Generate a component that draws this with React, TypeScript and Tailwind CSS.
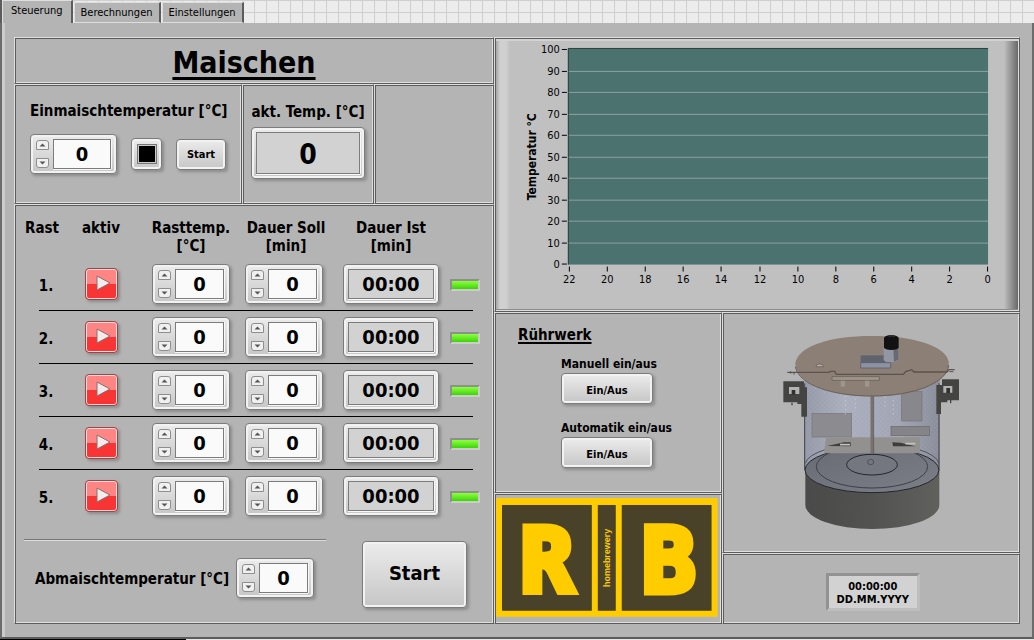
import { useState } from 'react';
import type { ReactNode } from 'react';

const tabs = ['Steuerung', 'Berechnungen', 'Einstellungen'];
const rests = [1, 2, 3, 4, 5];
const yTicks = [100, 90, 80, 70, 60, 50, 40, 30, 20, 10, 0];
const xTicks = [22, 20, 18, 16, 14, 12, 10, 8, 6, 4, 2, 0];

// Shared look of the raised silver controls and the sunken fields in them
const raised =
  'border border-[#7c7c7c] rounded-sm bg-linear-to-b from-[#ececec] to-[#c6c6c6] shadow-[inset_0_0_0_2px_#f2f2f2,2px_2px_3px_#8c8c8c]';
const sunken = 'border border-[#7c7c7c] shadow-[0_1px_0_#f8f8f8,1px_0_0_#f8f8f8]';

type PanelProps = {
  className?: string;
  children?: ReactNode;
};

const Panel = ({ className = '', children }: PanelProps) => (
  <section
    className={`border border-t-[#dedede] border-l-[#dedede] border-r-[#5c5c5c] border-b-[#5c5c5c] shadow-[inset_1px_1px_0_#5c5c5c,inset_-1px_-1px_0_#dedede] ${className}`}
  >
    {children}
  </section>
);

type SpinBoxProps = {
  id: string;
  label?: string;
  wide?: boolean;
};

const SpinBox = ({ id, label, wide = false }: SpinBoxProps) => {
  const [value, setValue] = useState(0);

  return (
    <div className={`inline-flex h-10 items-center gap-1 px-[5px] align-middle ${raised} ${wide ? 'w-[87px]' : 'w-[78px]'}`}>
      <div className="flex h-7 shrink-0 flex-col justify-between">
        <button
          type="button"
          aria-label="Wert erhöhen"
          onClick={() => setValue(value + 1)}
          className="flex h-[10px] w-[13px] items-center justify-center rounded-t-[3px] border border-[#8e8e8e] bg-[#f0f0f0]"
        >
          <svg width="7" height="4" viewBox="0 0 7 4">
            <path d="M0.5 3.5L3.5 0.5L6.5 3.5Z" fill="#555" />
          </svg>
        </button>
        <button
          type="button"
          aria-label="Wert verringern"
          onClick={() => setValue(value - 1)}
          className="flex h-[10px] w-[13px] items-center justify-center rounded-b-[3px] border border-[#8e8e8e] bg-[#f0f0f0]"
        >
          <svg width="7" height="4" viewBox="0 0 7 4">
            <path d="M0.5 0.5L3.5 3.5L6.5 0.5Z" fill="#555" />
          </svg>
        </button>
      </div>
      <input
        id={id}
        aria-label={label}
        inputMode="numeric"
        value={value}
        onChange={(e) => setValue(Number(e.target.value) || 0)}
        className={`h-[30px] min-w-0 flex-1 bg-[#fafafa] text-center text-xl font-bold leading-6 outline-none ${sunken}`}
      />
    </div>
  );
};

const TemperatureChart = () => (
  <svg viewBox="0 0 523 272" className="block w-full text-[11px]" role="img" aria-label="Temperaturverlauf">
    <rect x="72" y="9" width="421" height="217" fill="#4c726f" />
    <path d="M72.5 226V9.5H493" stroke="#2b4341" fill="none" />
    {yTicks.map((tick, i) => {
      const y = Math.round(10 + i * 21.5) + 0.5;
      return (
        <g key={tick}>
          {i > 0 && i < 10 && <path d={`M73 ${y}H493`} stroke="#8aa3a1" />}
          <path d={`M66 ${y}H71`} stroke="#000" />
          <text x="64" y={y + 4} textAnchor="end">
            {tick}
          </text>
        </g>
      );
    })}
    {xTicks.map((tick, i) => {
      const x = Math.round(73 + i * 38.1) + 0.5;
      return (
        <g key={tick}>
          <path d={`M${x} 228V233`} stroke="#000" />
          <text x={x} y="244" textAnchor="middle">
            {tick}
          </text>
        </g>
      );
    })}
    <text transform="translate(40 118) rotate(-90)" textAnchor="middle" className="text-xs font-bold">
      Temperatur °C
    </text>
  </svg>
);

const Logo = () => (
  <svg viewBox="0 0 222 119" className="block w-full" role="img" aria-label="RB homebrewery">
    <rect width="222" height="119" fill="#ffcc00" />
    <g fill="#494229">
      <rect x="6" y="7" width="90" height="106" />
      <rect x="102" y="7" width="18" height="106" />
      <rect x="126" y="7" width="90" height="106" />
    </g>
    <g
      fill="#ffcc00"
      stroke="#ffcc00"
      strokeWidth="7"
      className="font-['DejaVu_Sans_Mono',monospace] text-[89px] font-bold"
    >
      <text x="51" y="94" textAnchor="middle">
        R
      </text>
      <text x="173" y="94" textAnchor="middle">
        B
      </text>
    </g>
    <text
      transform="translate(114 60) rotate(-90)"
      textAnchor="middle"
      fill="#ffcc00"
      className="font-['Liberation_Sans',sans-serif] text-[9px] font-bold"
    >
      homebrewery
    </text>
  </svg>
);

const BrewKettle = () => (
  <svg viewBox="0 0 600 660" className="block w-[200px]" role="img" aria-label="Braukessel mit Rührwerk">
    <defs>
      <linearGradient id="glass" x1="0" x2="1" y1="0" y2="0">
        <stop offset="0" stopColor="#9599a8" />
        <stop offset="0.3" stopColor="#acb0bf" />
        <stop offset="0.7" stopColor="#a2a6b4" />
        <stop offset="1" stopColor="#8b8e9a" />
      </linearGradient>
      <linearGradient id="base" x1="0" x2="1" y1="0" y2="0">
        <stop offset="0" stopColor="#4a4a4a" />
        <stop offset="0.5" stopColor="#525250" />
        <stop offset="1" stopColor="#60605d" />
      </linearGradient>
      <linearGradient id="floor" x1="0" x2="1" y1="0" y2="1">
        <stop offset="0" stopColor="#686b73" />
        <stop offset="1" stopColor="#7c7f88" />
      </linearGradient>
      <pattern id="speckle" width="14" height="14" patternUnits="userSpaceOnUse">
        <path d="M2 3h3M9 10h3" stroke="#c7cad6" strokeWidth="2" />
        <path d="M9 3h3M2 10h3" stroke="#858999" strokeWidth="2" />
      </pattern>
    </defs>
    {/* vessel */}
    <path d="M106 180H508V555A201 72 0 0 1 106 555Z" fill="url(#base)" />
    <path d="M104 180H507V450H104Z" fill="url(#glass)" />
    <path d="M104 180H507V400H104Z" fill="url(#speckle)" opacity="0.35" />
    <ellipse cx="306" cy="450" rx="201" ry="68" fill="url(#floor)" stroke="#23262c" strokeWidth="3" />
    <path d="M106 430A201 64 0 0 1 507 430" fill="none" stroke="#50545d" strokeWidth="3" />
    <ellipse cx="306" cy="440" rx="167" ry="64" fill="none" stroke="#3c4048" strokeWidth="3" />
    <ellipse cx="306" cy="434" rx="76" ry="31" fill="#747780" stroke="#23262c" strokeWidth="3" />
    <ellipse cx="302" cy="426" rx="9" ry="8" fill="none" stroke="#3c4048" strokeWidth="2" />
    <path d="M104 190V450M507 190V450" stroke="#3d4046" strokeWidth="3" />
    {/* paddles */}
    <rect x="126" y="280" width="119" height="71" fill="#8c8b8f" stroke="#77777c" strokeWidth="2" />
    <rect x="395" y="215" width="61" height="88" fill="#88878b" stroke="#737378" strokeWidth="2" />
    <path d="M168 352H450V400H162Z" fill="#93918f" />
    <rect x="363" y="319" width="115" height="28" fill="#858488" stroke="#68686c" strokeWidth="2" />
    <path d="M172 378L222 367H242V379Z" fill="#3c3d3e" />
    <path d="M367 367L392 368L436 379H369Z" fill="#3c3d3e" />
    <path d="M210 374h30M406 371h30" stroke="#c2c1bd" strokeWidth="5" />
    <path d="M306 225V402" stroke="#77726f" strokeWidth="9" />
    <path d="M311 225V402" stroke="#55514f" strokeWidth="2" />
    <path d="M226 228V285M256 235V275M345 230V270M370 240V290" stroke="#d5d8e2" strokeWidth="2" strokeDasharray="4 9" />
    {/* handles */}
    <path
      d="M40 184H102V202H111V290H94V252H82V247H40ZM57 201V222H88V201Z"
      fill="#444543"
      fillRule="evenodd"
    />
    <path d="M65 210H76V224H65Z" fill="#303130" />
    <path
      d="M567 178H516V195H499V282H513V247H532V241H567ZM547 198V218H520V198Z"
      fill="#444543"
      fillRule="evenodd"
    />
    <path d="M529 204H540V219H529Z" fill="#303130" />
    <path d="M66 248v8M542 240v10" stroke="#444543" strokeWidth="4" />
    {/* lid */}
    <path d="M76 129C86 78 178 48 306 48C434 48 526 78 536 125C544 184 440 229 306 229C177 229 75 188 76 129Z" fill="#8b7f76" />
    <path d="M76 140C86 196 190 228 306 228C432 228 533 188 536 135" fill="none" stroke="#686059" strokeWidth="3" />
    <path
      d="M52 157H176L182 154H194L199 163H400L407 155L425 149L432 156H531L537 149H554"
      fill="none"
      stroke="#5b534e"
      strokeWidth="4"
    />
    <path d="M62 161V154M72 164V156M538 155H550" stroke="#5b534e" strokeWidth="3" />
    <path d="M186 170H328V181H186Z" fill="#a0958a" stroke="#635b55" strokeWidth="2" />
    <path d="M212 182H225V200H212ZM285 182H298V200H285Z" fill="#a0958a" />
    <path d="M138 140A11 8 0 0 1 160 140Z" fill="#b8b2ab" stroke="#5b534e" strokeWidth="2" />
    {/* motor */}
    <path d="M272 106H346V128H272Z" fill="#5f636e" />
    <path d="M272 128H362V144H272Z" fill="#8c92a3" stroke="#515560" strokeWidth="2" />
    <path d="M341 82H385V119A22 8 0 0 1 341 119Z" fill="#9396a3" />
    <path d="M370 84H385V119L372 125Z" fill="#686a73" />
    <path d="M342 54A22 9 0 0 1 386 54V82A22 8 0 0 1 342 82Z" fill="#111211" />
    <path d="M356 50A10 4 0 0 1 374 50" fill="none" stroke="#41423f" strokeWidth="3" />
  </svg>
);

const App = () => {
  const [activeTab, setActiveTab] = useState('Steuerung');

  return (
    <div className="flex min-h-screen flex-col bg-[#b4b4b4] font-['DejaVu_Sans_Condensed','DejaVu_Sans',sans-serif] text-black">
      <nav className="flex h-[23px] items-end gap-px border-l-2 border-[#5c5c5c] bg-[#ececec] bg-[linear-gradient(#cfcfcf_1px,transparent_1px),linear-gradient(90deg,#cfcfcf_1px,transparent_1px)] bg-size-[12px_12px] text-[11px] leading-4">
        {tabs.map((tab) => (
          <button
            key={tab}
            type="button"
            onClick={() => setActiveTab(tab)}
            className={`border-t border-l border-r-2 border-t-[#dedede] border-l-[#dedede] border-r-[#5c5c5c] bg-[#b4b4b4] ${
              tab === activeTab ? 'h-full px-2 pb-0.5' : 'h-[21px] border-b border-b-[#dedede] px-[6px]'
            }`}
          >
            {tab}
          </button>
        ))}
      </nav>

      <main className="flex flex-1 border-l-2 border-r-2 border-b-2 border-l-[#6c6c6c] border-r-[#6c6c6c] border-b-[#5c5c5c] bg-[#b4b4b4] px-3 pt-[14px] pb-[13px] shadow-[inset_3px_0_0_#cccccc]">
        <div className="flex shrink grow-[480] basis-0 flex-col">
          <Panel className="flex h-[47px] items-center justify-center">
            <h1 className="pt-1 pr-5 text-3xl font-bold underline decoration-3 underline-offset-4">Maischen</h1>
          </Panel>

          <div className="grid h-[120px] grid-cols-[228fr_132fr_120fr]">
            <Panel className="flex flex-col gap-[14px] pt-[17px] pl-[15px]">
              <label htmlFor="mash-in" className="text-[15px] font-bold leading-[18px]">
                Einmaischtemperatur [°C]
              </label>
              <div className="flex items-center gap-[14px]">
                <SpinBox id="mash-in" wide />
                <button type="button" aria-label="Stopp" className={`flex h-8 w-[31px] items-center justify-center ${raised}`}>
                  <span className="size-5 border border-[#777] bg-black shadow-[inset_0_0_0_1px_#c8c8c8]" />
                </button>
                <button type="button" className={`h-[31px] w-[50px] pt-0.5 text-[11px] font-bold ${raised}`}>
                  Start
                </button>
              </div>
            </Panel>
            <Panel className="flex flex-col items-center gap-[6px] pt-[18px]">
              <label htmlFor="current-temp" className="text-[15px] font-bold leading-[18px]">
                akt. Temp. [°C]
              </label>
              <div className={`flex h-[52px] w-[114px] items-center justify-center ${raised}`}>
                <output
                  id="current-temp"
                  className={`flex h-[42px] w-[104px] items-center justify-center bg-[#d2d2d2] pt-1 text-[28px] font-bold ${sunken}`}
                >
                  0
                </output>
              </div>
            </Panel>
            <Panel />
          </div>

          <Panel className="flex-1 pt-[14px] pr-[13px] pb-[15px] pl-[9px]">
            <table className="w-full table-fixed border-collapse text-[15px] font-bold">
              <colgroup>
                <col className="w-[36px]" />
                <col className="w-[82px]" />
                <col className="w-[98px]" />
                <col className="w-[92px]" />
                <col className="w-[118px]" />
                <col className="w-[30px]" />
              </colgroup>
              <thead>
                <tr className="h-[39px] align-top leading-[18px]">
                  <th className="p-0">Rast</th>
                  <th className="p-0">aktiv</th>
                  <th className="p-0">
                    Rasttemp.
                    <br />
                    [°C]
                  </th>
                  <th className="p-0">
                    Dauer Soll
                    <br />
                    [min]
                  </th>
                  <th className="p-0">
                    Dauer Ist
                    <br />
                    [min]
                  </th>
                  <th className="p-0" />
                </tr>
              </thead>
              <tbody>
                {rests.map((rest) => (
                  <tr
                    key={rest}
                    className={`h-[53px] text-center ${
                      rest < rests.length
                        ? 'bg-[linear-gradient(#000,#000)] bg-size-[calc(100%-22px)_1px] bg-position-[15px_bottom] bg-no-repeat'
                        : ''
                    }`}
                  >
                    <th scope="row" className="p-0 pt-1 pl-2">
                      {rest}.
                    </th>
                    <td className="p-0 pb-0.5">
                      <button
                        type="button"
                        aria-label={`Rast ${rest} aktivieren`}
                        className="inline-flex h-8 w-[33px] items-center justify-center rounded-sm border border-[#a04545] bg-linear-to-b from-[#ff8585] from-50% to-[#f93434] to-50% align-middle shadow-[inset_0_0_0_1px_#ffdada,2px_2px_3px_#8c8c8c]"
                      >
                        <svg width="17" height="19" viewBox="0 0 17 19" className="ml-1">
                          <path d="M2 2L15 9L2 16Z" fill="#f4ecec" stroke="#857070" strokeLinejoin="round" />
                        </svg>
                      </button>
                    </td>
                    <td className="p-0 pb-0.5">
                      <SpinBox id={`temp-${rest}`} label={`Rast ${rest}: Rasttemperatur`} />
                    </td>
                    <td className="p-0 pr-1 pb-0.5">
                      <SpinBox id={`duration-${rest}`} label={`Rast ${rest}: Dauer Soll`} />
                    </td>
                    <td className="p-0 pb-0.5">
                      <div className={`inline-flex h-10 w-24 items-center justify-center align-middle ${raised}`}>
                        <output
                          className={`h-[30px] w-[86px] bg-[#d2d2d2] text-center text-xl font-bold leading-7 ${sunken}`}
                        >
                          00:00
                        </output>
                      </div>
                    </td>
                    <td className="p-0">
                      <div className="h-3 border-2 border-t-[#8f8f8f] border-l-[#8f8f8f] border-r-[#cccccc] border-b-[#cccccc] bg-linear-to-b from-[#8cff3c] to-[#38d400]" />
                    </td>
                  </tr>
                ))}
              </tbody>
            </table>

            <div className="mt-4 flex justify-between pr-[13px]">
              <div className="w-[302px] border-t border-[#777] pl-[11px] shadow-[inset_0_1px_0_#dedede]">
                <div className="flex items-center justify-between pt-[18px] pr-3">
                  <label htmlFor="mash-out" className="pt-0.5 text-[15px] font-bold">
                    Abmaischtemperatur [°C]
                  </label>
                  <SpinBox id="mash-out" />
                </div>
              </div>
              <button type="button" className={`mt-0.5 h-[67px] w-[105px] pb-1 text-xl font-bold ${raised}`}>
                Start
              </button>
            </div>
          </Panel>
        </div>

        <div className="flex shrink grow-[527] basis-0 flex-col">
          <Panel>
            <div className="m-px bg-[#c0c0c0] bg-[linear-gradient(90deg,#a6a6a6,#d0d0d0_4px,#d0d0d0_10px,#c0c0c0_14px,#c0c0c0_calc(100%-14px),#686868)] shadow-[inset_0_2px_0_#d2d2d2,inset_0_-1px_0_#8c8c8c]">
              <TemperatureChart />
            </div>
          </Panel>

          <div className="grid flex-1 grid-cols-[228fr_299fr]">
            <div className="flex flex-col">
              <Panel className="flex-1 pt-[13px] pl-[23px]">
                <h2 className="text-[15px] font-bold leading-[18px] underline decoration-2 underline-offset-2">Rührwerk</h2>
                <div className="mt-3 flex flex-col items-start pl-[43px] text-xs font-bold leading-4">
                  <span id="manual">Manuell ein/aus</span>
                  <button
                    type="button"
                    aria-describedby="manual"
                    className={`mt-px mb-4 h-[31px] w-[92px] pt-1 text-[11px] ${raised}`}
                  >
                    Ein/Aus
                  </button>
                  <span id="automatic">Automatik ein/aus</span>
                  <button
                    type="button"
                    aria-describedby="automatic"
                    className={`mt-px h-[31px] w-[92px] pt-1 text-[11px] ${raised}`}
                  >
                    Ein/Aus
                  </button>
                </div>
              </Panel>
              <Panel className="pt-1 pr-[3px] pb-[6px] pl-px">
                <Logo />
              </Panel>
            </div>
            <div className="flex flex-col">
              <Panel className="flex flex-1 items-center justify-center pr-0.5 pb-[6px]">
                <BrewKettle />
              </Panel>
              <Panel className="flex h-[71px] items-center justify-center pt-[6px] pl-1">
                <time className="border-3 border-t-[#929292] border-l-[#929292] border-r-[#bebebe] border-b-[#bebebe] bg-[#d2d2d2] px-2 pt-1 pb-0.5 text-center text-[11px] font-bold leading-[13px]">
                  00:00:00
                  <br />
                  DD.MM.YYYY
                </time>
              </Panel>
            </div>
          </div>
        </div>
      </main>
      <div className="h-0.5 bg-[#e4e4e4] bg-[linear-gradient(90deg,#000_18%,transparent_18%)]" />
    </div>
  );
};

export default App;
